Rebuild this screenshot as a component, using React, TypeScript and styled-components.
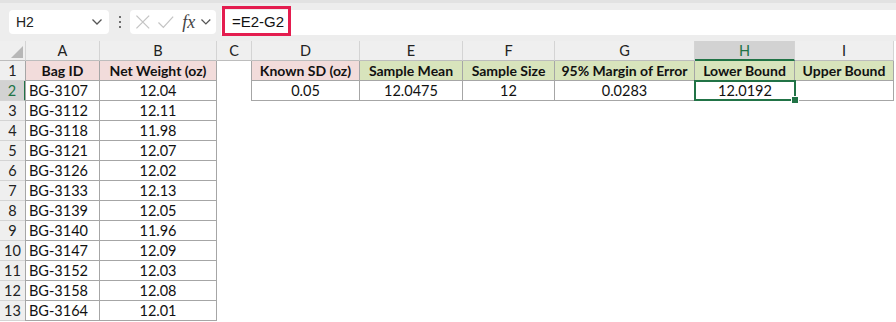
import styled, { createGlobalStyle } from "styled-components";

const GlobalStyle = createGlobalStyle`
	html, body {
		margin: 0;
		padding: 0;
		background: #ffffff;
	}
	body {
		font-family: Lato, "Liberation Sans", sans-serif;
	}
`;

const GREEN = "#217346";
const COLUMNS = ["A", "B", "C", "D", "E", "F", "G", "H", "I"];
const WIDTHS = [26, 74, 117, 35, 108, 103, 92, 140, 100, 99];

const bags = [
	["BG-3107", "12.04"],
	["BG-3112", "12.11"],
	["BG-3118", "11.98"],
	["BG-3121", "12.07"],
	["BG-3126", "12.02"],
	["BG-3133", "12.13"],
	["BG-3139", "12.05"],
	["BG-3140", "11.96"],
	["BG-3147", "12.09"],
	["BG-3152", "12.03"],
	["BG-3158", "12.08"],
	["BG-3164", "12.01"],
];

const stats = [
	{ label: "Known SD (oz)", value: "0.05", fill: "pink" },
	{ label: "Sample Mean", value: "12.0475", fill: "green" },
	{ label: "Sample Size", value: "12", fill: "green" },
	{ label: "95% Margin of Error", value: "0.0283", fill: "green" },
	{ label: "Lower Bound", value: "12.0192", fill: "green" },
	{ label: "Upper Bound", value: "", fill: "green" },
];

type Fill = "pink" | "green" | "none";

const fills: Record<Fill, string> = {
	pink: "#f2dcdb",
	green: "#d8e4bc",
	none: "#ffffff",
};

const App = () => {
	const rows = Array.from({ length: 13 }, (_, i) => i + 1);

	return (
		<>
			<GlobalStyle />
			<Window>
				<Toolbar>
					<NameBox>
						<span>H2</span>
						<Chevron />
					</NameBox>
					<Dots>
						<i />
						<i />
						<i />
					</Dots>
					<FuncBox>
						<svg width="18" height="18" viewBox="0 0 18 18">
							<path d="M2.5 2.5 L15.5 15.5 M15.5 2.5 L2.5 15.5" stroke="#c4c4c4" strokeWidth="1.3" fill="none" />
						</svg>
						<svg width="18" height="18" viewBox="0 0 18 18">
							<path d="M1.5 9.5 L6.5 14.5 L16.5 3.5" stroke="#c4c4c4" strokeWidth="1.3" fill="none" />
						</svg>
						<Fx>fx</Fx>
						<Chevron />
					</FuncBox>
					<FormulaInput>
						<Highlight>=E2-G2</Highlight>
					</FormulaInput>
				</Toolbar>

				<Sheet>
					<Corner>
						<svg width="12" height="12" viewBox="0 0 12 12">
							<path d="M12 0 L12 12 L0 12 Z" fill="#b7b7b7" />
						</svg>
					</Corner>
					{COLUMNS.map((c) => (
						<ColHead key={c} $active={c === "H"}>
							{c}
						</ColHead>
					))}

					{rows.map((r) => {
						const bag = r > 1 ? bags[r - 2] : null;
						const stat = r <= 2;
						return [
							<RowHead key={`h${r}`} $active={r === 2}>
								{r}
							</RowHead>,
							r === 1 ? (
								<Cell key={`a${r}`} $border $left $fill="pink" $bold>
									Bag ID
								</Cell>
							) : (
								<Cell key={`a${r}`} $border $left $align="left">
									{bag?.[0]}
								</Cell>
							),
							r === 1 ? (
								<Cell key={`b${r}`} $border $fill="pink" $bold>
									Net Weight (oz)
								</Cell>
							) : (
								<Cell key={`b${r}`} $border>
									{bag?.[1]}
								</Cell>
							),
							<Cell key={`c${r}`} />,
							...stats.map((s, i) =>
								stat ? (
									<Cell
										key={`s${r}${i}`}
										$border
										$left={i === 0}
										$fill={r === 1 ? (s.fill as Fill) : "none"}
										$bold={r === 1}
										$selected={r === 2 && i === 4}
									>
										{r === 1 ? s.label : s.value}
										{r === 2 && i === 4 && <FillHandle />}
									</Cell>
								) : (
									<Cell key={`s${r}${i}`} />
								)
							),
						];
					})}
				</Sheet>
			</Window>
		</>
	);
};

const Chevron = () => (
	<svg width="12" height="8" viewBox="0 0 12 8">
		<path d="M1.5 1.5 L6 6 L10.5 1.5" stroke="#555" strokeWidth="1.3" fill="none" />
	</svg>
);

const Window = styled.div`
	width: 896px;
	height: 322px;
	overflow: hidden;
	background: #ffffff;
`;

const Toolbar = styled.div`
	height: 41px;
	box-sizing: border-box;
	display: flex;
	align-items: center;
	padding: 4px 0 4px 9px;
	background: #ededed;
	border-top: 3px solid #e2e2e2;
`;

const NameBox = styled.div`
	width: 100px;
	height: 24px;
	box-sizing: border-box;
	display: flex;
	align-items: center;
	justify-content: space-between;
	padding: 0 6px 0 7px;
	background: #ffffff;
	border-radius: 4px;
	font-family: "Liberation Sans", sans-serif;
	font-size: 14px;
	color: #222;
`;

const Dots = styled.div`
	width: 21px;
	display: flex;
	flex-direction: column;
	align-items: center;
	gap: 3px;

	i {
		width: 2px;
		height: 2px;
		background: #444;
		border-radius: 1px;
	}
`;

const FuncBox = styled.div`
	width: 86px;
	height: 24px;
	box-sizing: border-box;
	display: flex;
	align-items: center;
	gap: 5px;
	padding: 0 4px 0 4px;
	background: #ffffff;
	border-radius: 4px;
`;

const Fx = styled.span`
	font-family: "Liberation Serif", serif;
	font-style: italic;
	font-size: 18px;
	color: #444;
	margin-left: 3px;
	line-height: 1;
`;

const FormulaInput = styled.div`
	flex: 1;
	height: 25px;
	margin-left: 5px;
	display: flex;
	align-items: center;
	background: #ffffff;
`;

const Highlight = styled.div`
	width: 69px;
	height: 30px;
	margin: -4px 0 -2px 1px;
	box-sizing: border-box;
	display: flex;
	align-items: center;
	padding-left: 7px;
	border: 3px solid #e41d4f;
	font-family: "Liberation Sans", sans-serif;
	font-size: 15px;
	color: #111;
`;

const Sheet = styled.div`
	display: grid;
	grid-template-columns: ${WIDTHS.map((w) => `${w}px`).join(" ")};
	grid-auto-rows: 20px;
	font-size: 14.5px;
	color: #111;
`;

const Corner = styled.div`
	background: #efefef;
	border-right: 1px solid #d4d4d4;
	border-bottom: 1px solid #bdbdbd;
	display: flex;
	align-items: flex-end;
	justify-content: flex-end;
	padding: 0 2px 2px 0;
	box-sizing: border-box;
`;

const ColHead = styled.div<{ $active?: boolean }>`
	box-sizing: border-box;
	display: flex;
	align-items: center;
	justify-content: center;
	background: ${(p) => (p.$active ? "#d2d2d2" : "#efefef")};
	color: ${(p) => (p.$active ? GREEN : "#222")};
	border-right: 1px solid #d4d4d4;
	border-bottom: ${(p) => (p.$active ? `2px solid ${GREEN}` : "1px solid #bdbdbd")};
	font-size: 14.5px;
`;

const RowHead = styled.div<{ $active?: boolean }>`
	box-sizing: border-box;
	display: flex;
	align-items: center;
	justify-content: center;
	background: ${(p) => (p.$active ? "#d2d2d2" : "#efefef")};
	color: ${(p) => (p.$active ? GREEN : "#222")};
	border-right: ${(p) => (p.$active ? `2px solid ${GREEN}` : "1px solid #bdbdbd")};
	border-bottom: 1px solid #d4d4d4;
	font-size: 14.5px;
`;

const Cell = styled.div<{
	$border?: boolean;
	$left?: boolean;
	$fill?: Fill;
	$bold?: boolean;
	$align?: "left" | "center";
	$selected?: boolean;
}>`
	position: relative;
	box-sizing: border-box;
	display: flex;
	align-items: center;
	justify-content: ${(p) => (p.$align === "left" ? "flex-start" : "center")};
	padding-left: ${(p) => (p.$align === "left" ? "3px" : "0")};
	white-space: nowrap;
	background: ${(p) => fills[p.$fill ?? "none"]};
	font-weight: ${(p) => (p.$bold ? 700 : 400)};
	font-size: ${(p) => (p.$bold ? "14px" : "14.5px")};
	border-right: ${(p) => (p.$border ? "1px solid #a6a6a6" : "none")};
	border-bottom: ${(p) => (p.$border ? "1px solid #a6a6a6" : "none")};
	border-left: ${(p) => (p.$left ? "1px solid #a6a6a6" : "none")};
	margin-left: ${(p) => (p.$left ? "-1px" : "0")};
	${(p) =>
		p.$selected &&
		`
		box-shadow: inset 0 0 0 2px ${GREEN};
		margin: -1px -1px 0 -1px;
		border: none;
		z-index: 1;
	`}
`;

const FillHandle = styled.span`
	position: absolute;
	right: -3px;
	bottom: -3px;
	width: 6px;
	height: 6px;
	background: ${GREEN};
	border: 1px solid #ffffff;
`;

export default App;
